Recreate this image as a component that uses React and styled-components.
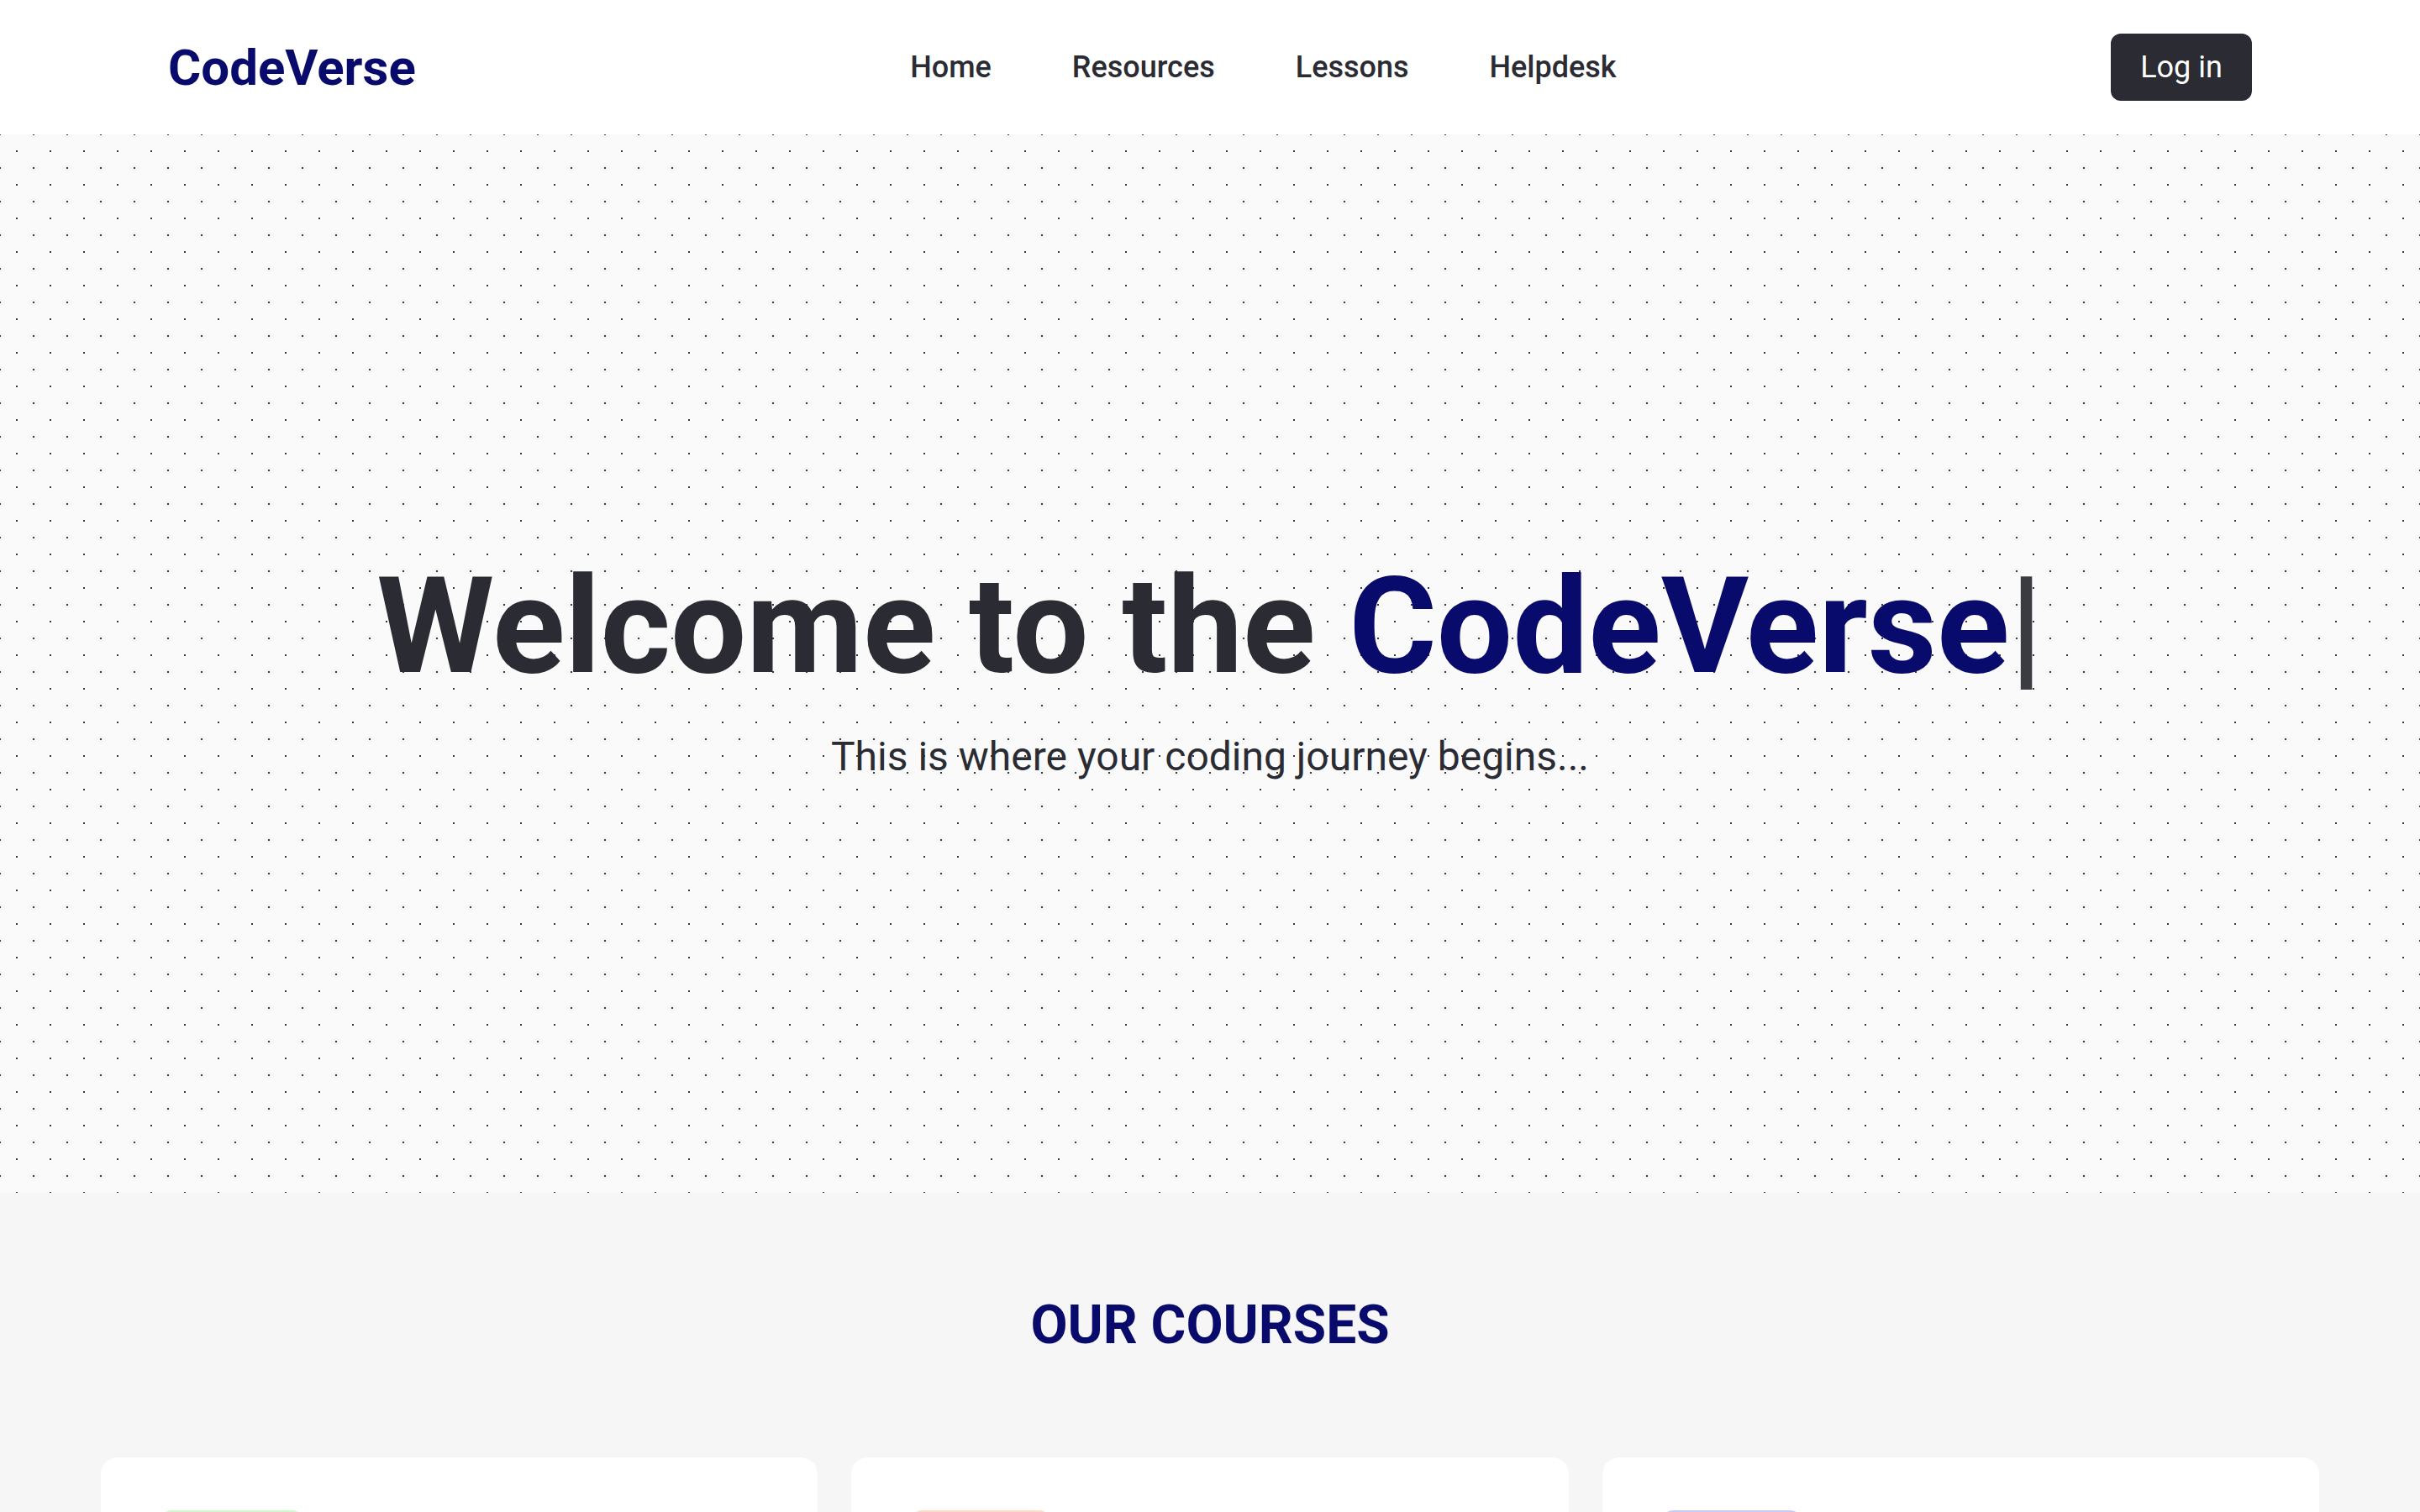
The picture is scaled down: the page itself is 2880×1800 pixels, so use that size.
import React from 'react';
import styled, { createGlobalStyle } from 'styled-components';

const GlobalStyle = createGlobalStyle`
  * {
    box-sizing: border-box;
  }

  body {
    margin: 0;
    font-family: Roboto, "Liberation Sans", Arial, sans-serif;
    color: #2b2c33;
    background: #f6f6f7;
  }
`;

const Header = styled.header`
  height: 160px;
  display: flex;
  align-items: center;
  justify-content: space-between;
  padding: 0 200px;
  background: #ffffff;
`;

const Logo = styled.a`
  font-size: 60px;
  font-weight: 700;
  color: #080b6c;
  text-decoration: none;
`;

const Nav = styled.nav`
  display: flex;
  gap: 96px;
`;

const NavLink = styled.a`
  font-size: 36px;
  font-weight: 500;
  color: #2b2c33;
  text-decoration: none;
`;

const LoginButton = styled.button`
  width: 168px;
  height: 80px;
  border: none;
  border-radius: 12px;
  background: #2b2c33;
  color: #ffffff;
  font-family: inherit;
  font-size: 36px;
  font-weight: 400;
  cursor: pointer;
`;

const Hero = styled.section`
  height: 1260px;
  display: flex;
  flex-direction: column;
  align-items: center;
  justify-content: center;
  padding-top: 22px;
  background-color: #fafafb;
  background-image:
    radial-gradient(circle, #35353a 1.4px, transparent 1.4px),
    radial-gradient(circle, #35353a 1.4px, transparent 1.4px);
  background-size: 40px 40px;
  background-position: -20px -20px, 0 0;
`;

const Title = styled.h1`
  margin: 0;
  font-size: 160px;
  line-height: 1;
  font-weight: 700;
  color: #2b2c33;
  white-space: nowrap;
`;

const Accent = styled.span`
  color: #080b6c;
`;

const Caret = styled.span`
  color: #3b3c42;
`;

const Subtitle = styled.p`
  margin: 39px 0 0;
  font-size: 48px;
  line-height: 1.5;
  color: #2b2c33;
`;

const Courses = styled.section`
  background: #f6f6f7;
  padding: 120px 120px 160px;
`;

const SectionTitle = styled.h2`
  margin: 0 0 118px;
  text-align: center;
  font-size: 64px;
  line-height: 1.2;
  font-weight: 700;
  color: #080b6c;
`;

const CardGrid = styled.div`
  max-width: 2640px;
  margin: 0 auto;
  display: grid;
  grid-template-columns: repeat(3, 1fr);
  gap: 40px;
`;

const Card = styled.article`
  background: #ffffff;
  border-radius: 20px;
  padding: 63px 72px 72px;
  min-height: 640px;
`;

const Badge = styled.span`
  display: inline-block;
  width: ${p => p.$w}px;
  padding: 12px 0;
  text-align: center;
  border-radius: 12px;
  background: ${p => p.$bg};
  color: ${p => p.$fg};
  font-size: 28px;
  font-weight: 600;
`;

const CardTitle = styled.h3`
  margin: 40px 0 24px;
  font-size: 48px;
  font-weight: 700;
  color: #2b2c33;
`;

const CardText = styled.p`
  margin: 0;
  font-size: 32px;
  line-height: 1.6;
  color: #55565e;
`;

const courses = [
  {
    level: 'HTML',
    w: 168,
    bg: '#d1f7cc',
    fg: '#2c7a23',
    title: 'Web Fundamentals',
    text: 'Learn HTML, CSS and the basics of building pages for the web.',
  },
  {
    level: 'JS',
    w: 164,
    bg: '#fbdcc6',
    fg: '#a35214',
    title: 'JavaScript in Depth',
    text: 'Master functions, objects, async code and the modern language.',
  },
  {
    level: 'React',
    w: 164,
    bg: '#c8cbf7',
    fg: '#2e3399',
    title: 'Full-Stack Projects',
    text: 'Build and deploy complete applications with a real backend.',
  },
];

export default function App() {
  return (
    <>
      <GlobalStyle />
      <Header>
        <Logo href="#">CodeVerse</Logo>
        <Nav>
          <NavLink href="#">Home</NavLink>
          <NavLink href="#">Resources</NavLink>
          <NavLink href="#">Lessons</NavLink>
          <NavLink href="#">Helpdesk</NavLink>
        </Nav>
        <LoginButton>Log in</LoginButton>
      </Header>

      <Hero>
        <Title>
          Welcome to the <Accent>CodeVerse</Accent>
          <Caret>|</Caret>
        </Title>
        <Subtitle>This is where your coding journey begins...</Subtitle>
      </Hero>

      <Courses>
        <SectionTitle>OUR COURSES</SectionTitle>
        <CardGrid>
          {courses.map(c => (
            <Card key={c.title}>
              <Badge $w={c.w} $bg={c.bg} $fg={c.fg}>{c.level}</Badge>
              <CardTitle>{c.title}</CardTitle>
              <CardText>{c.text}</CardText>
            </Card>
          ))}
        </CardGrid>
      </Courses>
    </>
  );
}
